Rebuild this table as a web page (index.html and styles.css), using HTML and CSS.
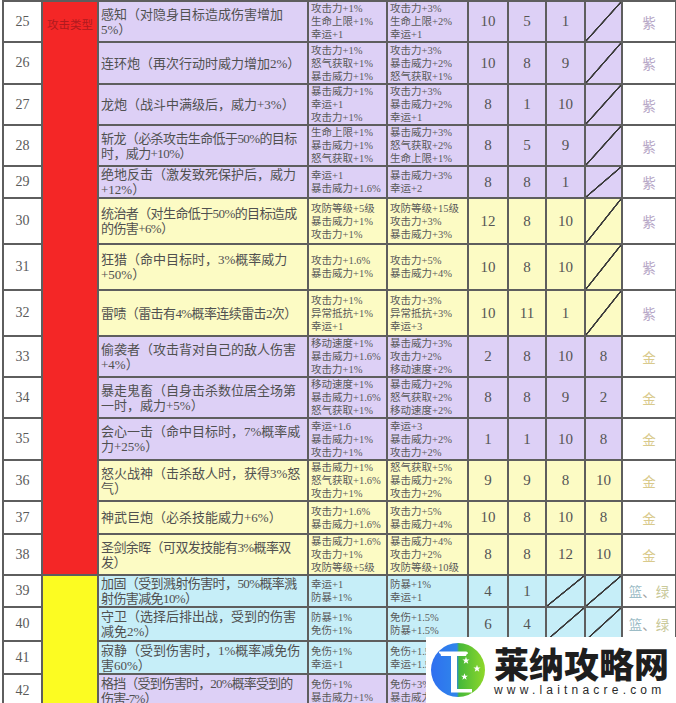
FILE: index.html
```html
<!DOCTYPE html>
<html lang="zh">
<head>
<meta charset="utf-8">
<title>技能表</title>
<link rel="stylesheet" href="styles.css">
</head>
<body>
<div class="page">
<table class="skills">
<colgroup>
<col class="c-no"><col class="c-type"><col class="c-name"><col class="c-a1"><col class="c-a2">
<col class="c-n1"><col class="c-n2"><col class="c-n3"><col class="c-n4"><col class="c-q">
</colgroup>
<tbody>
<tr class="purple h41">
<td class="no">25</td>
<td class="type red" rowspan="14"><span>攻击类型</span></td>
<td class="name">感知（对隐身目标造成伤害增加<br>5%）</td>
<td class="attr">攻击力+1%<br>生命上限+1%<br>幸运+1</td>
<td class="attr">攻击力+3%<br>生命上限+2%<br>幸运+1</td>
<td class="num">10</td><td class="num">5</td><td class="num">1</td><td class="slash"></td>
<td class="q zi">紫</td>
</tr>
<tr class="purple h42">
<td class="no">26</td>
<td class="name">连环炮（再次行动时威力增加2%）</td>
<td class="attr">攻击力+1%<br>怒气获取+1%<br>暴击威力+1%</td>
<td class="attr">攻击力+3%<br>暴击威力+2%<br>怒气获取+1%</td>
<td class="num">10</td><td class="num">8</td><td class="num">9</td><td class="slash"></td>
<td class="q zi">紫</td>
</tr>
<tr class="purple h41">
<td class="no">27</td>
<td class="name">龙炮（战斗中满级后，威力+3%）</td>
<td class="attr">暴击威力+1%<br>幸运+1<br>攻击力+1%</td>
<td class="attr">攻击力+3%<br>暴击威力+2%<br>幸运+1</td>
<td class="num">8</td><td class="num">1</td><td class="num">10</td><td class="slash"></td>
<td class="q zi">紫</td>
</tr>
<tr class="purple h41">
<td class="no">28</td>
<td class="name tight">斩龙（必杀攻击生命低于50%的目标<br>时，威力+10%）</td>
<td class="attr">生命上限+1%<br>暴击威力+1%<br>怒气获取+1%</td>
<td class="attr">暴击威力+3%<br>怒气获取+2%<br>生命上限+1%</td>
<td class="num">8</td><td class="num">5</td><td class="num">9</td><td class="slash"></td>
<td class="q zi">紫</td>
</tr>
<tr class="purple h32">
<td class="no">29</td>
<td class="name">绝地反击（激发致死保护后，威力<br>+12%）</td>
<td class="attr">幸运+1<br>暴击威力+1.6%</td>
<td class="attr">暴击威力+3%<br>幸运+2</td>
<td class="num">8</td><td class="num">8</td><td class="num">1</td><td class="slash"></td>
<td class="q zi">紫</td>
</tr>
<tr class="yellow h46">
<td class="no">30</td>
<td class="name tight">统治者（对生命低于50%的目标造成<br>的伤害+6%）</td>
<td class="attr">攻防等级+5级<br>暴击威力+1%<br>攻击力+1%</td>
<td class="attr">攻防等级+15级<br>攻击力+3%<br>暴击威力+3%</td>
<td class="num">12</td><td class="num">8</td><td class="num">10</td><td class="slash"></td>
<td class="q zi">紫</td>
</tr>
<tr class="yellow h46">
<td class="no">31</td>
<td class="name">狂猎（命中目标时，3%概率威力<br>+50%）</td>
<td class="attr">攻击力+1.6%<br>暴击威力+1%</td>
<td class="attr">攻击力+5%<br>暴击威力+4%</td>
<td class="num">10</td><td class="num">8</td><td class="num">10</td><td class="slash"></td>
<td class="q zi">紫</td>
</tr>
<tr class="yellow h46">
<td class="no">32</td>
<td class="name tight">雷啧（雷击有4%概率连续雷击2次）</td>
<td class="attr">攻击力+1%<br>异常抵抗+1%<br>幸运+1</td>
<td class="attr">攻击力+3%<br>异常抵抗+3%<br>幸运+3</td>
<td class="num">10</td><td class="num">11</td><td class="num">1</td><td class="slash"></td>
<td class="q zi">紫</td>
</tr>
<tr class="purple h41">
<td class="no">33</td>
<td class="name">偷袭者（攻击背对自己的敌人伤害<br>+4%）</td>
<td class="attr">移动速度+1%<br>暴击威力+1.6%<br>攻击力+1%</td>
<td class="attr">暴击威力+3%<br>攻击力+2%<br>移动速度+2%</td>
<td class="num">2</td><td class="num">8</td><td class="num">10</td><td class="num">8</td>
<td class="q jin">金</td>
</tr>
<tr class="purple h40">
<td class="no">34</td>
<td class="name">暴走鬼畜（自身击杀数位居全场第<br>一时，威力+5%）</td>
<td class="attr">移动速度+1%<br>暴击威力+1.6%<br>怒气获取+1%</td>
<td class="attr">暴击威力+2%<br>怒气获取+2%<br>移动速度+2%</td>
<td class="num">8</td><td class="num">8</td><td class="num">9</td><td class="num">2</td>
<td class="q jin">金</td>
</tr>
<tr class="purple h42">
<td class="no">35</td>
<td class="name">会心一击（命中目标时，7%概率威<br>力+25%）</td>
<td class="attr">幸运+1.6<br>暴击威力+1%<br>攻击力+1%</td>
<td class="attr">幸运+3<br>暴击威力+2%<br>攻击力+2%</td>
<td class="num">1</td><td class="num">1</td><td class="num">10</td><td class="num">8</td>
<td class="q jin">金</td>
</tr>
<tr class="yellow h41">
<td class="no">36</td>
<td class="name">怒火战神（击杀敌人时，获得3%怒<br>气）</td>
<td class="attr">暴击威力+1%<br>怒气获取+1.6%<br>攻击力+1%</td>
<td class="attr">怒气获取+5%<br>暴击威力+2%<br>攻击力+2%</td>
<td class="num">9</td><td class="num">9</td><td class="num">8</td><td class="num">10</td>
<td class="q jin">金</td>
</tr>
<tr class="yellow h33">
<td class="no">37</td>
<td class="name">神武巨炮（必杀技能威力+6%）</td>
<td class="attr">攻击力+1.6%<br>暴击威力+1.6%</td>
<td class="attr">攻击力+5%<br>暴击威力+4%</td>
<td class="num">10</td><td class="num">8</td><td class="num">10</td><td class="num">8</td>
<td class="q jin">金</td>
</tr>
<tr class="yellow h41">
<td class="no">38</td>
<td class="name tight">圣剑余晖（可双发技能有3%概率双<br>发）</td>
<td class="attr">暴击威力+1.6%<br>攻击力+1%<br>攻防等级+5级</td>
<td class="attr">暴击威力+4%<br>攻击力+2%<br>攻防等级+10级</td>
<td class="num">8</td><td class="num">8</td><td class="num">12</td><td class="num">10</td>
<td class="q jin">金</td>
</tr>
<tr class="blue h32">
<td class="no">39</td>
<td class="type yel" rowspan="4"></td>
<td class="name tight">加固（受到溅射伤害时，50%概率溅<br>射伤害减免10%）</td>
<td class="attr">幸运+1<br>防暴+1%</td>
<td class="attr">防暴+1%<br>幸运+1</td>
<td class="num">4</td><td class="num">1</td><td class="slash"></td><td class="slash"></td>
<td class="q"><span class="lan">篮</span><span class="dun">、</span><span class="lv">绿</span></td>
</tr>
<tr class="blue h34">
<td class="no">40</td>
<td class="name">守卫（选择后排出战，受到的伤害<br>减免2%）</td>
<td class="attr">防暴+1%<br>免伤+1%</td>
<td class="attr">免伤+1.5%<br>防暴+1.5%</td>
<td class="num">6</td><td class="num">4</td><td class="slash"></td><td class="slash"></td>
<td class="q"><span class="lan">篮</span><span class="dun">、</span><span class="lv">绿</span></td>
</tr>
<tr class="blue h33">
<td class="no">41</td>
<td class="name">寂静（受到伤害时，1%概率减免伤<br>害60%）</td>
<td class="attr">免伤+1%<br>幸运+1</td>
<td class="attr">免伤+1.5%<br>幸运+1.5</td>
<td class="num">4</td><td class="num">1</td><td class="slash"></td><td class="slash"></td>
<td class="q"><span class="lan">篮</span><span class="dun">、</span><span class="lv">绿</span></td>
</tr>
<tr class="purple h33">
<td class="no">42</td>
<td class="name tighter">格挡（受到伤害时，20%概率受到的<br>伤害-7%）</td>
<td class="attr">免伤+1%<br>暴击威力+1%</td>
<td class="attr">免伤+3%<br>暴击威力+2%</td>
<td class="num">8</td><td class="num">8</td><td class="num">8</td><td class="slash"></td>
<td class="q zi">紫</td>
</tr>
</tbody>
</table>

<div class="watermark">
<svg class="logo" viewBox="0 0 56 56" width="56" height="56" aria-hidden="true">
<defs>
<linearGradient id="lg" x1="0" y1="0" x2="1" y2="0">
<stop offset="0" stop-color="#2f6ff0"/>
<stop offset="0.48" stop-color="#2f86ea"/>
<stop offset="0.52" stop-color="#46b83a"/>
<stop offset="1" stop-color="#8fd82a"/>
</linearGradient>
</defs>
<circle cx="28" cy="28" r="27" fill="url(#lg)"/>
<path d="M9 9.5 H36 Q38 9.5 38 11.5 Q36 12 36 14 H27 V47 H42 V50.5 H21 V14 H11 Q11 11.5 9 11 Z" fill="#fff"/>
<path d="M30 12 L31 15 L34 15 L31.6 16.8 L32.5 19.8 L30 18 L27.5 19.8 L28.4 16.8 L26 15 L29 15 Z" fill="#fff" transform="translate(9 4) scale(0.9)"/>
<path d="M30 12 L31 15 L34 15 L31.6 16.8 L32.5 19.8 L30 18 L27.5 19.8 L28.4 16.8 L26 15 L29 15 Z" fill="#fff" transform="translate(20 12) scale(0.9)"/>
<path d="M30 12 L31 15 L34 15 L31.6 16.8 L32.5 19.8 L30 18 L27.5 19.8 L28.4 16.8 L26 15 L29 15 Z" fill="#fff" transform="translate(9 21) scale(0.85)"/>
</svg>
<div class="brand">
<div class="brand-name">莱纳攻略网</div>
<div class="brand-url">www.laitnacre.com</div>
</div>
</div>
</div>
</body>
</html>
```
FILE: styles.css
```css
html, body {
  margin: 0;
  padding: 0;
  background: #ffffff;
}
.page {
  position: relative;
  width: 676px;
  height: 703px;
  overflow: hidden;
}
.skills {
  margin: 0 0 0 2px;
  border-collapse: collapse;
  table-layout: fixed;
  width: 673px;
  font-family: "Liberation Serif", "Noto Sans CJK SC", serif;
  color: #555;
}
.skills td {
  border: 2px solid #5e5e5e;
  padding: 0 2px;
  vertical-align: middle;
  overflow: hidden;
  white-space: nowrap;
}
.c-no { width: 39px; }
.c-type { width: 56px; }
.c-name { width: 210px; }
.c-a1 { width: 79px; }
.c-a2 { width: 81px; }
.c-n1 { width: 40px; }
.c-n2 { width: 38px; }
.c-n3 { width: 39px; }
.c-n4 { width: 37px; }
.c-q { width: 54px; }

.h32 { height: 32px; }
.h33 { height: 33px; }
.h34 { height: 34px; }
.h40 { height: 40px; }
.h41 { height: 41px; }
.h42 { height: 42px; }
.h46 { height: 46px; }

.purple td { background: #ddd0f6; }
.yellow td { background: #fcfbc4; }
.blue td { background: #c6eef8; }

.skills td.no {
  background: #ffffff;
  text-align: center;
  font-size: 14px;
  color: #5a5a5a;
}
.skills td.type {
  vertical-align: top;
  text-align: center;
  padding: 13px 0 0;
}
.skills td.red { background: #f42626; }
.skills td.yel { background: #fcfc22; }
.type span {
  font-size: 11.5px;
  line-height: 15px;
  color: #b01a1e;
}
.skills td.name {
  font-size: 13px;
  line-height: 15px;
  color: #505050;
  padding: 0 0 0 2px;
  overflow: visible;
}
.skills td.name.tight { letter-spacing: -0.6px; }
.skills td.name.tighter { letter-spacing: -0.85px; }
.attr {
  font-size: 10.5px;
  line-height: 13px;
  color: #5a5a5a;
}
.num {
  text-align: center;
  font-size: 15px;
  color: #555;
}
.skills td.slash {
  background-image: linear-gradient(to top left, transparent calc(50% - 1px), #3c3c3c calc(50% - 0.6px), #3c3c3c calc(50% + 0.6px), transparent calc(50% + 1px));
}
.skills td.q {
  background: #ffffff;
  text-align: center;
  font-size: 13.5px;
}
.zi { color: #b6a6c6; }
.jin { color: #d9ca8c; }
.lan { color: #9cbcc6; }
.dun { color: #a0a0a0; }
.lv { color: #c9c99a; }

.watermark {
  position: absolute;
  left: 426px;
  top: 637px;
  width: 250px;
  height: 66px;
  background: #ffffff;
  display: flex;
  align-items: center;
  gap: 8px;
  padding-left: 4px;
  box-sizing: border-box;
}
.logo { flex: none; }
.brand {
  display: flex;
  flex-direction: column;
  align-items: flex-start;
}
.brand-name {
  font-family: "Noto Sans CJK SC", sans-serif;
  font-weight: 900;
  font-size: 35px;
  line-height: 38px;
  color: #1e1e1e;
  letter-spacing: 0;
}
.brand-url {
  font-family: "Liberation Sans", sans-serif;
  font-size: 12px;
  line-height: 14px;
  letter-spacing: 4.2px;
  color: #2a2a2a;
  margin-top: 1px;
}
```
